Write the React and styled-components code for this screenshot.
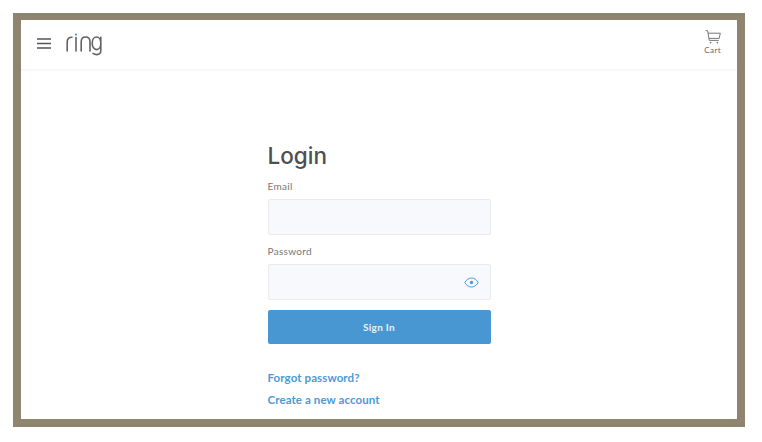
import React from 'react';
import styled, { createGlobalStyle } from 'styled-components';

const GlobalStyle = createGlobalStyle`
  html, body {
    margin: 0;
    padding: 0;
    background: #fff;
    font-family: 'Lato', 'Noto Sans', sans-serif;
  }
`;

const Page = styled.div`
  width: 762px;
  height: 442px;
  padding: 13px 0 0 13px;
  box-sizing: border-box;
  overflow: hidden;
  will-change: opacity;
`;

const Frame = styled.div`
  width: 732px;
  height: 414px;
  box-sizing: border-box;
  border: solid #8f8470;
  border-width: 7px 8px 8px 8px;
  background: #fff;
  display: flex;
  flex-direction: column;
  overflow: hidden;
`;

const Header = styled.header`
  height: 49px;
  flex: none;
  display: flex;
  align-items: center;
  padding: 0 16px;
  border-bottom: 1px solid #f5f5f5;
  box-shadow: 0 1px 2px rgba(0, 0, 0, 0.02);
`;

const MenuIcon = styled.svg`
  display: block;
  margin: -2px 14px 0 0;
`;

const Logo = styled.svg`
  display: block;
`;

const CartLink = styled.div`
  margin: -5px 0 0 auto;
  display: flex;
  flex-direction: column;
  align-items: center;
  gap: 2px;
  color: #666;
  font-size: 8px;
  line-height: 8px;
  letter-spacing: 0.4px;
`;

const CartIcon = styled.svg`
  display: block;
`;

const Main = styled.main`
  flex: 1;
  display: flex;
  justify-content: center;
  padding-top: 73px;
`;

const Form = styled.div`
  width: 223px;
  display: flex;
  flex-direction: column;
`;

const Title = styled.h1`
  margin: 0 0 10px;
  font-family: 'Inter', sans-serif;
  font-size: 22.5px;
  line-height: 26px;
  font-weight: 550;
  color: #4f4f4f;
`;

const Label = styled.label`
  font-family: 'Lato', sans-serif;
  font-size: 10px;
  line-height: 14px;
  letter-spacing: 0.3px;
  color: #777;
  margin-bottom: 6px;
`;

const Field = styled.div`
  position: relative;
  height: 36px;
  box-sizing: border-box;
  background: #f8f9fc;
  border: 1px solid #e9ebf0;
  border-radius: 2px;
  margin-bottom: ${({ $gap }) => $gap}px;
`;

const EyeIcon = styled.svg`
  position: absolute;
  right: 11px;
  top: 12px;
`;

const SignIn = styled.button`
  height: 34px;
  border: 0;
  border-radius: 2px;
  background: #4896d2;
  color: #e6f1fa;
  font-family: 'Lato', sans-serif;
  font-size: 10px;
  font-weight: 700;
  letter-spacing: 0.3px;
  margin-bottom: 26px;
  padding: 0;
`;

const TextLink = styled.a`
  font-family: 'Lato', sans-serif;
  font-size: 11.5px;
  line-height: 16px;
  font-weight: 700;
  letter-spacing: 0.1px;
  color: #4a9bd6;
  margin-bottom: 6px;
`;

function RingLogo() {
  return (
    <Logo width="37" height="26" viewBox="0 0 37 26" fill="none" stroke="#626262" strokeWidth="1.6" strokeLinecap="round">
      <path d="M2.2 19V10C2.2 6.8 4 5 7 5.2" />
      <circle cx="11" cy="2.6" r="1.1" fill="#4a9bd6" stroke="none" />
      <path d="M11 5.5V19" />
      <path d="M16.2 19V9.8C16.2 6.8 18 5 20.6 5C23.2 5 25 6.8 25 9.8V19" />
      <path d="M35.8 11.2C35.8 15 33.9 17.6 31.5 17.6C29.1 17.6 27.2 15 27.2 11.2C27.2 7.6 29.1 5 31.5 5C33.9 5 35.8 7.6 35.8 11.2ZM35.8 5.3V18.6C35.8 21 34.2 22.6 31.6 22.6C30.2 22.6 29 22.2 28 21.4" />
    </Logo>
  );
}

export default function App() {
  return (
    <>
      <GlobalStyle />
      <Page>
        <Frame>
          <Header>
            <MenuIcon width="14" height="11" viewBox="0 0 14 11" stroke="#555" strokeWidth="1.6">
              <path d="M0 1H14M0 5.5H14M0 10H14" />
            </MenuIcon>
            <RingLogo />
            <CartLink>
              <CartIcon width="16" height="14" viewBox="0 0 16 14" fill="none" stroke="#777" strokeWidth="1">
                <path d="M0.5 0.6H2.6L4.3 10.4H13.8" />
                <path d="M3.1 3.2H15.3L14.2 8.4H4" />
                <circle cx="5.6" cy="12.6" r="0.9" fill="#777" stroke="none" />
                <circle cx="12.4" cy="12.6" r="0.9" fill="#777" stroke="none" />
              </CartIcon>
              Cart
            </CartLink>
          </Header>
          <Main>
            <Form>
              <Title>Login</Title>
              <Label>Email</Label>
              <Field $gap={9} />
              <Label>Password</Label>
              <Field $gap={10}>
                <EyeIcon width="15" height="11" viewBox="0 0 15 11" fill="none" stroke="#4a9bd6" strokeWidth="1">
                  <path d="M0.8 5.5C2.5 2.6 4.8 1 7.5 1C10.2 1 12.5 2.6 14.2 5.5C12.5 8.4 10.2 10 7.5 10C4.8 10 2.5 8.4 0.8 5.5Z" />
                  <circle cx="7.5" cy="5.5" r="1.7" fill="#4a9bd6" stroke="none" />
                </EyeIcon>
              </Field>
              <SignIn type="button">Sign In</SignIn>
              <TextLink>Forgot password?</TextLink>
              <TextLink>Create a new account</TextLink>
            </Form>
          </Main>
        </Frame>
      </Page>
    </>
  );
}
